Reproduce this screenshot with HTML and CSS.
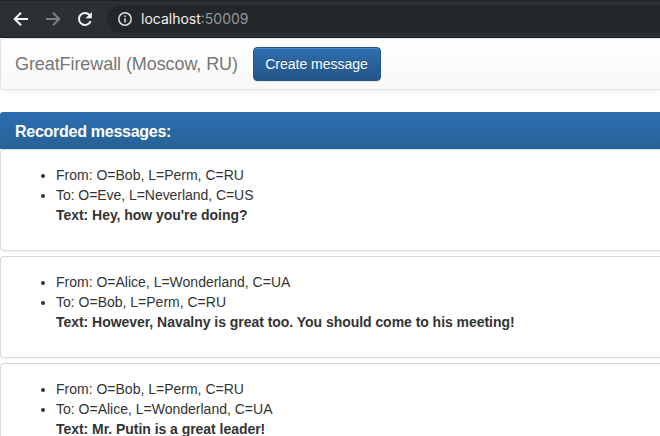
FILE: index.html
```html
<!DOCTYPE html>
<html lang="en">
<head>
<meta charset="utf-8">
<title>GreatFirewall</title>
<link rel="stylesheet" href="styles.css">
</head>
<body>
<header class="toolbar">
  <svg class="icon" viewBox="0 0 18 18"><path d="M16 9H3M9 2.7 2.7 9 9 15.3"/></svg>
  <svg class="icon icon-dim" viewBox="0 0 18 18"><path d="M2 9h13M9 2.7 15.3 9 9 15.3"/></svg>
  <svg class="icon" viewBox="0 0 18 18"><path d="M14.6 11.1A6 6 0 1 1 13.4 4.9"/><path class="solid" d="M15.8 2v6.2H9.6z"/></svg>
  <div class="address">
    <svg class="info" viewBox="0 0 16 16"><circle cx="8" cy="8" r="6.2"/><path d="M8 7.2v4.3M8 4.4v1.7"/></svg>
    <span class="host">localhost</span><span class="port">:50009</span>
  </div>
</header>
<main class="page">
  <nav class="navbar">
    <span class="brand">GreatFirewall (Moscow, RU)</span>
    <button class="btn" type="button">Create message</button>
  </nav>
  <section class="messages">
    <h3 class="heading">Recorded messages:</h3>
    <article class="panel">
      <ul>
        <li>From: O=Bob, L=Perm, C=RU</li>
        <li><span class="recipient">To: O=Eve, L=Neverland, C=US</span><br><b>Text: Hey, how you're doing?</b></li>
      </ul>
    </article>
    <article class="panel">
      <ul>
        <li>From: O=Alice, L=Wonderland, C=UA</li>
        <li>To: O=Bob, L=Perm, C=RU<br><b>Text: However, Navalny is great too. You should come to his meeting!</b></li>
      </ul>
    </article>
    <article class="panel">
      <ul>
        <li>From: O=Bob, L=Perm, C=RU</li>
        <li>To: O=Alice, L=Wonderland, C=UA<br><b>Text: Mr. Putin is a great leader!</b></li>
      </ul>
    </article>
  </section>
</main>
</body>
</html>
```
FILE: styles.css
```css
* { box-sizing: border-box; }
body {
  margin: 0;
  height: 436px;
  overflow: hidden;
  background: #fff;
  color: #333;
  font: 14px/20px "Liberation Sans", Arial, sans-serif;
}
.toolbar {
  display: flex;
  align-items: center;
  height: 38px;
  padding-left: 12px;
  border-top: 1px solid #202225;
  border-bottom: 1px solid #202124;
  background: #2d3033;
}
.icon {
  flex: none;
  width: 18px;
  height: 18px;
  margin-right: 14px;
  fill: none;
  stroke: #f4f5f5;
  stroke-width: 2;
}
.icon-dim { stroke: #7d8083; }
.icon .solid { fill: #f4f5f5; stroke: none; }
.address {
  flex: 1;
  display: flex;
  align-items: center;
  height: 28px;
  margin-left: -1px;
  padding-left: 10px;
  border-radius: 14px 0 0 14px;
  background: #23272a;
  font: 14px/20px Inter, sans-serif;
}
.info {
  width: 16px;
  height: 16px;
  margin-right: 8px;
  fill: none;
  stroke: #dfe1e3;
  stroke-width: 1.5;
}
.host { color: #f1f2f3; }
.port { color: #92979b; }
.navbar {
  display: flex;
  align-items: center;
  height: 52px;
  margin-bottom: 22px;
  padding: 0 15px 0 14px;
  border: 1px solid #e2e2e2;
  border-right: 0;
  border-radius: 4px 0 0 4px;
  background: linear-gradient(#fff, #f8f8f8);
  box-shadow: 0 1px 5px rgba(0, 0, 0, .075);
}
.brand {
  width: 238px;
  color: #777;
  font-size: 18px;
  letter-spacing: -.08px;
  white-space: nowrap;
}
.btn {
  width: 128px;
  height: 34px;
  padding: 0 1px 0 0;
  border: 1px solid #245580;
  border-radius: 4px;
  background: linear-gradient(#2d6fb0, #255587);
  box-shadow: inset 0 1px 0 rgba(255, 255, 255, .15), 0 1px 1px rgba(0, 0, 0, .075);
  color: #fff;
  font: 14px/20px "Liberation Sans", Arial, sans-serif;
  text-shadow: 0 -1px 0 rgba(0, 0, 0, .2);
}
.heading {
  height: 37px;
  margin: 0;
  padding: 11px 15px;
  border-radius: 3px 0 0 0;
  background: linear-gradient(#2b6eb0, #276297);
  color: #fff;
  font-size: 16px;
  line-height: 18px;
  letter-spacing: -.27px;
}
.panel {
  height: 102px;
  margin-bottom: 5px;
  padding: 15px;
  border: 1px solid #d8d8d8;
  border-right: 0;
  border-radius: 4px 0 0 4px;
  box-shadow: 0 1px 2px rgba(0, 0, 0, .05);
}
.panel:last-child { margin-bottom: 0; }
.panel ul {
  margin: 0 0 10px;
  padding-left: 40px;
}
.panel b {
  letter-spacing: -.04px;
  white-space: nowrap;
}
.recipient { letter-spacing: -.05px; }
```
